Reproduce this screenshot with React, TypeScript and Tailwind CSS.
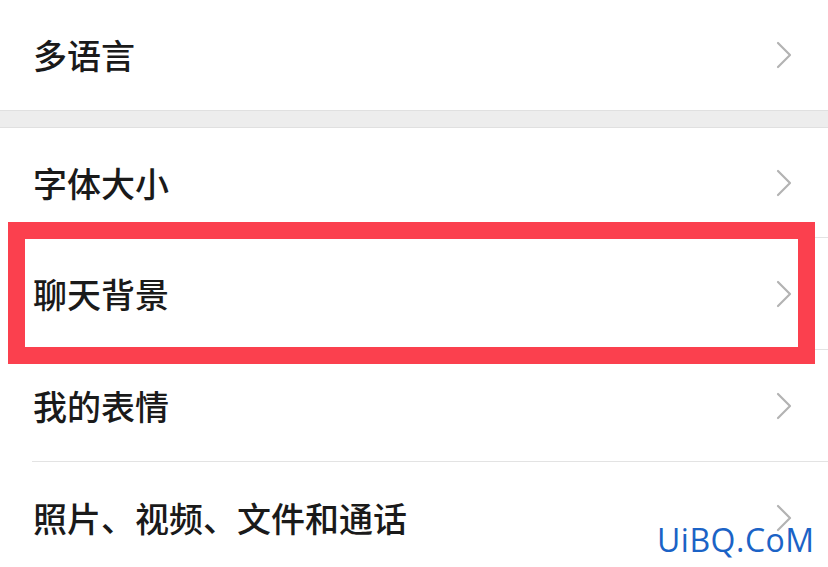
const rows = [
  { label: '字体大小', h: 'h-[110px]' },
  { label: '聊天背景', h: 'h-[112px]' },
  { label: '我的表情', h: 'h-[112px]' },
  { label: '照片、视频、文件和通话', h: 'h-[112px]' },
]

function Chevron() {
  return (
    <svg width="18" height="28" viewBox="0 0 18 28" className="shrink-0">
      <polyline points="3,2 15,14 3,26" fill="none" stroke="#b3b3b3" strokeWidth="2.2" strokeLinecap="round" strokeLinejoin="round" />
    </svg>
  )
}

function Row({ label, h, last }: { label: string; h: string; last?: boolean }) {
  return (
    <div className={`${h} flex items-center pl-[33px] pr-[35px] relative`}>
      <span className="flex-1 text-[34px] font-medium text-[#1a1a1a] leading-none">{label}</span>
      <Chevron />
      {!last && <div className="absolute left-[32px] right-0 bottom-0 h-px bg-[#e3e3e3]" />}
    </div>
  )
}

export default function App() {
  return (
    <div
      className="relative w-[828px] h-[567px] overflow-hidden bg-white"
      style={{ fontFamily: '"Noto Sans CJK SC", "Noto Sans", sans-serif' }}
    >
      {/* 多语言 */}
      <div className="h-[110px] flex items-center pl-[33px] pr-[35px]">
        <span className="flex-1 text-[34px] font-medium text-[#1a1a1a] leading-none">多语言</span>
        <Chevron />
      </div>

      {/* 分组间隔 */}
      <div className="h-[18px] bg-[#ededed] border-t border-b border-[#e0e0e0]" />

      {rows.map((r, i) => (
        <Row key={r.label} label={r.label} h={r.h} last={i === rows.length - 1} />
      ))}

      {/* 红色标注框 */}
      <div className="absolute left-[8px] top-[222px] w-[807px] h-[142px] border-[17px] border-[#fb404e]" />

      {/* 水印 */}
      <div
        className="absolute left-[657px] top-[524px] text-[32px] text-[#1b63c6] leading-none tracking-[0.5px]"
        style={{ fontFamily: '"Open Sans", "DejaVu Sans", sans-serif' }}
      >
        UiBQ.CoM
      </div>
    </div>
  )
}
